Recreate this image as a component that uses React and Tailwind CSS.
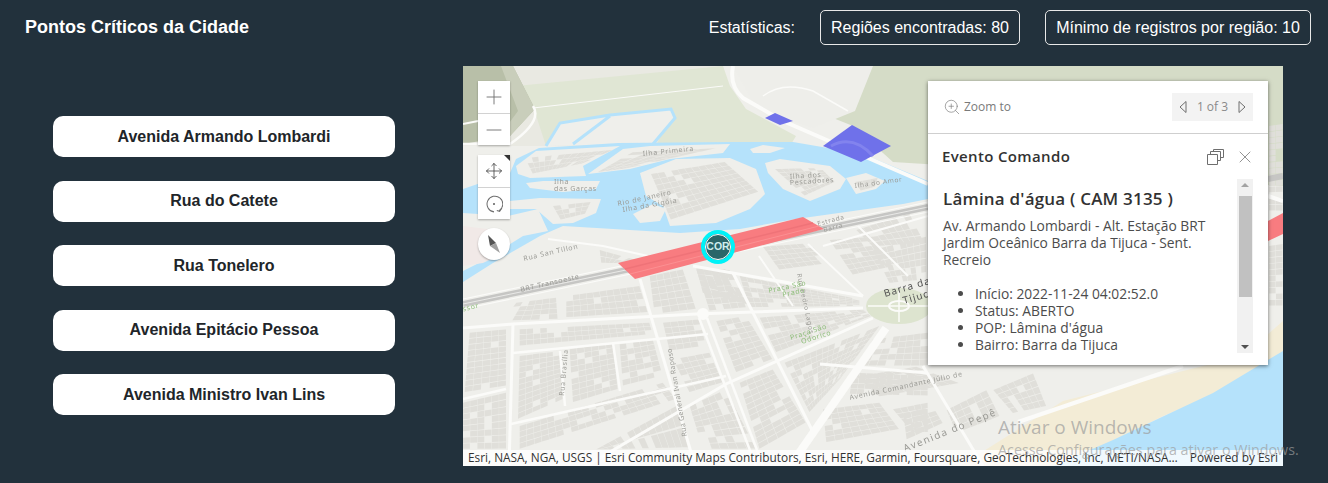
import React from 'react';
import { ZoomIn, Plus, Minus, Move, X } from 'lucide-react';

const streets = ['Avenida Armando Lombardi', 'Rua do Catete', 'Rua Tonelero', 'Avenida Epitácio Pessoa', 'Avenida Ministro Ivan Lins'];

const z2 = (q) => q.map(([x, y]) => [x / 3, y / 3 + 200]);
const z8 = (q) => q.map(([x, y]) => [x / 3, y / 3 + 134]);
const z9 = (q) => q.map(([x, y]) => [x / 3 + 317, y / 3 + 214]);

// quarteirões do mapa: cada um é preenchido com pequenos prédios
const blocks = [
    ...[
        [[310, 90], [530, 60], [555, 140], [310, 155]],
        [[560, 30], [660, 10], [700, 130], [575, 145]],
        [[700, 10], [810, 10], [850, 125], [740, 135]],
        [[830, 30], [1190, 100], [1190, 120], [860, 125]],
        [[160, 110], [280, 95], [285, 160], [120, 165]],
        [[170, 190], [560, 170], [570, 205], [170, 240]],
        [[600, 170], [710, 160], [730, 240], [620, 255]],
        [[760, 165], [850, 150], [930, 280], [820, 320]],
        [[890, 155], [1200, 130], [1225, 150], [940, 260]],
        [[20, 200], [130, 190], [130, 360], [5, 380]],
        [[170, 270], [290, 255], [300, 400], [165, 460]],
        [[320, 250], [450, 230], [465, 370], [330, 410]],
        [[470, 235], [570, 220], [600, 330], [480, 360]],
        [[630, 280], [740, 260], [780, 350], [680, 380]],
        [[0, 410], [130, 380], [130, 550], [0, 550]],
        [[170, 480], [600, 350], [640, 400], [170, 550]],
        [[830, 350], [930, 310], [1030, 470], [890, 550]],
        [[680, 420], [790, 370], [880, 550], [720, 550]],
        [[400, 550], [640, 420], [680, 550], [420, 550]],
        [[965, 290], [1250, 180], [1130, 340], [1040, 440]],
        [[1230, 220], [1395, 200], [1395, 300], [1190, 300]],
        [[1170, 320], [1395, 330], [1395, 390], [1160, 385]],
        [[1080, 430], [1250, 410], [1310, 490], [1090, 530]],
        [[1290, 430], [1395, 410], [1395, 500], [1350, 500]],
    ].map(z2),
    ...[
        [[700, 205], [800, 210], [870, 320], [720, 280]],
        [[900, 140], [1040, 130], [1100, 190], [950, 210]],
        [[1100, 120], [1230, 110], [1290, 200], [1170, 225]],
        [[1180, 90], [1340, 40], [1385, 130], [1230, 140]],
        [[1230, 150], [1390, 110], [1390, 240], [1280, 250]],
        [[410, 150], [520, 180], [470, 190], [415, 190]],
    ].map(z8),
    ...[
        [[640, 330], [760, 280], [800, 380], [700, 400]],
        [[500, 390], [620, 330], [660, 410], [530, 460]],
        [[370, 400], [460, 380], [490, 430], [380, 480]],
        [[230, 290], [410, 260], [540, 310], [300, 350]],
    ].map(z9),
    // ilhas
    [[188, 108], [262, 96], [296, 126], [208, 154]],
    [[135, 106], [170, 86], [255, 82], [165, 102]],
    [[312, 103], [358, 102], [372, 116], [342, 130]],
    [[392, 116], [415, 112], [412, 121], [398, 125]],
    [[90, 140], [128, 136], [122, 148], [98, 154]],
    [[62, 92], [150, 84], [118, 98], [70, 108]],
    // faixa à direita do popup
    [[806, 60], [820, 58], [820, 145], [806, 145]],
    [[806, 180], [820, 178], [820, 240], [806, 240]],
];

const lerp = (a, b, t) => [a[0] + (b[0] - a[0]) * t, a[1] + (b[1] - a[1]) * t];

const buildBuildings = () => {
    let seed = 7;
    const rnd = () => {
        seed = (seed * 16807) % 2147483647;
        return seed / 2147483647;
    };
    const out = [];
    blocks.forEach((q) => {
        const w = Math.hypot(q[1][0] - q[0][0], q[1][1] - q[0][1]);
        const h = Math.hypot(q[3][0] - q[0][0], q[3][1] - q[0][1]);
        const nx = Math.max(2, Math.round(w / 7));
        const ny = Math.max(2, Math.round(h / 6));
        for (let i = 0; i < nx; i++) {
            for (let j = 0; j < ny; j++) {
                if (rnd() < 0.12) continue;
                const cell = [[i, j], [i + 0.95, j], [i + 0.95, j + 0.9], [i, j + 0.9]].map(([u, v]) =>
                    lerp(lerp(q[0], q[1], u / nx), lerp(q[3], q[2], u / nx), v / ny)
                );
                out.push(cell.map((p) => p.map((n) => n.toFixed(1)).join(',')).join(' '));
            }
        }
    });
    return out;
};

const buildings = buildBuildings();

const whiteRoads = [
    ['M0 262 L50 258 L233 248 L400 242', 3],
    ['M230 200 L400 230', 3],
    ['M423 262 L327 400', 8],
    ['M236 252 L293 400', 2.5],
    ['M244 252 L300 400', 2.5],
    ['M177 213 L232 400', 3],
    ['M270 207 L352 370', 3],
    ['M50 258 L46 400', 3],
    ['M48 358 L263 310', 2.5],
    ['M123 400 L263 318 L410 252', 3],
    ['M50 287 L245 268', 2.5],
    ['M0 333 L43 323', 2.5],
    ['M357 298 L465 307', 3],
    ['M97 285 L102 340', 2.5],
    ['M150 277 L157 325', 2.5],
    ['M555 356 L720 300', 4],
    ['M460 300 L520 400', 3],
    ['M270 0 Q266 20 280 32 L320 55 L465 118', 4],
    ['M805 130 L820 135', 4],
    ['M0 58 L40 50', 2],
    ['M70 40 Q80 55 47 78 L0 78', 2.5],
    ['M85 173 L140 180 L185 190', 2],
    ['M296 190 L330 240', 2],
    ['M345 178 L400 230', 2],
    ['M395 160 L445 210', 2],
    ['M360 180 L465 150', 2],
    ['M300 30 Q320 15 350 25 L385 45', 1.5],
    ['M70 42 L260 20', 1],
];

const MapLabel = ({ x, y, rotate = 0, fill = '#9b9b96', size = 7, spacing = 0.7, children }) => (
    <text x={x} y={y} transform={`rotate(${rotate} ${x} ${y})`} fill={fill} fontSize={size} letterSpacing={spacing} fontFamily="'Noto Sans', sans-serif">
        {children}
    </text>
);

const LAND = '#efefeb';

const BaseMap = () => (
    <svg viewBox="0 0 820 400" className="absolute inset-0 w-full h-full blur-[0.7px]">
        <rect width="820" height="400" fill={LAND} />
        {/* morros e parque */}
        <path d="M340 0H820V120L430 96L390 60L365 50Z" fill="#d5dcc7" />
        <path d="M0 0H260L270 40L200 80H0Z" fill="#e9e9e2" />
        <path d="M270 0H410L392 45L350 62L295 45Z" fill="#eeeeea" />
        <path d="M53 20L260 0L267 20L283 43L333 70L327 80H193L210 43L147 48L83 80L70 40Z" fill="#e0e6d4" />
        <path d="M0 0H50L72 43L47 70L0 78Z" fill="#b8bfa8" />
        <path d="M50 0L72 43L47 70L35 72L55 45L38 0Z" fill="#c9cebb" />
        {/* terreno cercado pelo canal */}
        <path d="M83 80L97 57L147 49L208 43L212 52L190 78Z" fill={LAND} />
        {/* água */}
        <path d="M0 123L47 107L53 93L76 82L155 77L267 76L330 76L400 88L465 115L465 133L440 138L333 153L277 163L217 167L100 160L77 170L30 197L0 216Z" fill="#b5e2fb" />
        <path d="M83 80L97 57L147 49L208 43L212 52L190 78M110 78L147 50" stroke="#b5e2fb" strokeWidth="3" fill="none" />
        {/* ilhas */}
        <path d="M53 100L73 85L157 80L120 100L123 110L67 112L55 108Z" fill={LAND} />
        <path d="M125 108L160 83L187 80L267 78L260 87L207 93L167 103Z" fill={LAND} />
        <path d="M177 107L213 93L267 92L293 103L302 128L287 143L253 157L207 160L200 140L183 130Z" fill={LAND} />
        <path d="M63 117L80 115L137 115L133 123L100 126L67 122Z" fill={LAND} />
        <path d="M47 135L77 132L138 133L133 147L110 157L90 158L73 143L47 143Z" fill={LAND} />
        <path d="M302 97L317 93L367 100L383 113L377 123L347 135L320 123L305 107Z" fill={LAND} />
        <path d="M383 112L403 107L422 115L413 123L393 128Z" fill={LAND} />
        <path d="M287 83L300 79L322 82L307 87L290 87Z" fill={LAND} />
        <path d="M170 148L190 138L203 143L197 155L177 157Z" fill={LAND} />
        <path d="M0 147L45 150L75 143L85 165L60 170L20 195L0 205Z" fill={LAND} />
        <path d="M0 160L40 165L45 185L20 197L0 200Z" fill="#f1e9e7" />
        {/* praça */}
        <ellipse cx="436" cy="240" rx="33" ry="18" fill="#dde4cf" />
        {/* praia e mar */}
        <path d="M497 400L600 335L780 290L820 255V300L700 350L600 400Z" fill="#f3ecd6" />
        <path d="M820 285V400H590L650 374L750 327Z" fill="#b5e2fb" />
        <g fill="#e0dfda">
            {buildings.map((points, i) => (
                <polygon key={i} points={points} />
            ))}
        </g>
        {whiteRoads.map(([d, w]) => (
            <path key={d} d={d} stroke="#fbfbf9" strokeWidth={w} fill="none" />
        ))}
        <circle cx="240" cy="248" r="6" fill="#fbfbf9" />
        <ellipse cx="436" cy="240" rx="10" ry="5" fill="none" stroke="#fbfbf9" strokeWidth="2" />
        <path d="M405 240H465M436 225V256" stroke="#fbfbf9" strokeWidth="1.5" />
        {/* BRT */}
        <path d="M0 238L465 141M805 113L820 110" stroke="#c6c6c4" strokeWidth="6" fill="none" />
        <path d="M0 238L465 141" stroke="#e9e9e7" strokeWidth="1" fill="none" />
        <path d="M0 233L465 136M0 243L465 146" stroke="#fbfbf9" strokeWidth="1.2" fill="none" />
        {/* regiões */}
        <polygon points="302,52 312,47 330,55 317,59" fill="#6f71ea" />
        <polygon points="360,80 389,59 428,80 398,96" fill="#6f71ea" />
        <path d="M368 80Q390 68 410 90" stroke="#8283ee" strokeWidth="3" fill="none" />
        <polygon points="155,197 340,151 361,163 172,213" fill="#f87c80" />
        <path d="M162 203L350 157" stroke="#ef7378" strokeWidth="1.5" />
        <path d="M167 208L356 160" stroke="#fb9092" strokeWidth="1" />
        <polygon points="805,155 820,147 820,168 805,175" fill="#f87c80" />
        {/* nomes */}
        <MapLabel x={180} y={90} rotate={-6}>Ilha Primeira</MapLabel>
        <MapLabel x={91} y={118}>Ilha</MapLabel>
        <MapLabel x={91} y={125}>das Garças</MapLabel>
        <MapLabel x={155} y={140} rotate={-12}>Rio de Janeiro</MapLabel>
        <MapLabel x={160} y={146} rotate={-10}>Ilha da Gigóia</MapLabel>
        <MapLabel x={327} y={113} rotate={-4}>Ilha dos</MapLabel>
        <MapLabel x={327} y={119} rotate={-4}>Pescadores</MapLabel>
        <MapLabel x={392} y={122} rotate={-8} size={6.5}>Ilha do Amor</MapLabel>
        <MapLabel x={61} y={195} rotate={-13}>Rua San Tillon</MapLabel>
        <MapLabel x={58} y={226} rotate={-13}>BRT Transoeste</MapLabel>
        <MapLabel x={355} y={160} rotate={-15} size={6.5}>Estrada</MapLabel>
        <MapLabel x={361} y={166} rotate={-15} size={6.5}>Barra</MapLabel>
        <MapLabel x={334} y={208} rotate={78} size={6.5}>Rua Pedro Lagos</MapLabel>
        <MapLabel x={101} y={330} rotate={-85}>Rua Brasília</MapLabel>
        <MapLabel x={224} y={370} rotate={-100} spacing={0.3}>Rua General Ivan Raposo</MapLabel>
        <MapLabel x={306} y={227} rotate={-12} fill="#8cbd78" size={7}>Praça São</MapLabel>
        <MapLabel x={320} y={231} rotate={-12} fill="#8cbd78" size={7}>Prado</MapLabel>
        <MapLabel x={328} y={274} rotate={-18} fill="#8cbd78">Praça São</MapLabel>
        <MapLabel x={339} y={278} rotate={-18} fill="#8cbd78">Odorico</MapLabel>
        <MapLabel x={422} y={231} rotate={-16} fill="#555" size={10} spacing={1}>Barra da</MapLabel>
        <MapLabel x={441} y={238} rotate={-16} fill="#555" size={10} spacing={1}>Tijuca</MapLabel>
        <MapLabel x={387} y={334} rotate={-12}>Avenida Comandante Júlio de</MapLabel>
        <MapLabel x={442} y={386} rotate={-22} size={10} spacing={1.4}>Avenida do Pepê</MapLabel>
        <MapLabel x={-20} y={251} rotate={-15} fill="#8cbd78">Professor</MapLabel>
    </svg>
);

const MapButton = ({ children, divider }) => (
    <div className={`w-8 h-8 flex items-center justify-center text-[#6e6e6e] relative ${divider ? 'border-t border-[#d2d2d2]' : ''}`}>{children}</div>
);

const DockIcon = () => (
    <svg width="17" height="16" viewBox="0 0 17 16" fill="none" stroke="#6e6e6e" strokeWidth="1">
        <path d="M0.5 5.5h10v10h-10z" />
        <path d="M3.5 5.5v-3h10v9h-3" />
        <path d="M6.5 2.5v-2h10v8h-3" />
    </svg>
);

const Popup = () => (
    <div className="absolute top-[15px] left-[465px] w-[340px] h-[284px] bg-white shadow-[0_1px_4px_rgba(0,0,0,0.55)] text-[#4c4c4c] font-['Open_Sans',sans-serif]">
        <div className="h-[53px] pl-[15px] pr-4 border-b border-[#cfcfcf] flex items-center justify-between">
            <div className="flex items-center gap-[3px] text-[12px] text-[#7a7a7a]">
                <ZoomIn size={18} strokeWidth={0.9} />
                <span>Zoom to</span>
            </div>
            <div className="w-[81px] h-7 mr-[-1px] bg-[#f3f3f3] flex items-center justify-between px-[6px] text-[12px] text-[#8a8a8a]">
                <svg width="10" height="14" viewBox="0 0 10 14" fill="none" stroke="#6e6e6e"><path d="M8 1.5L2 7l6 5.5z" /></svg>
                <span>1 of 3</span>
                <svg width="10" height="14" viewBox="0 0 10 14" fill="none" stroke="#6e6e6e"><path d="M2 1.5L8 7l-6 5.5z" /></svg>
            </div>
        </div>
        <div className="flex items-center justify-between pl-[14px] pr-[13px] h-[45px]">
            <h2 className="text-[15px] font-semibold tracking-[0.35px] text-[#323232]">Evento Comando</h2>
            <div className="flex items-center gap-[11px]">
                <DockIcon />
                <X size={20} strokeWidth={0.9} className="text-[#6e6e6e]" />
            </div>
        </div>
        <div className="flex pl-[15px] pr-[15px]">
            <div className="flex-1 pt-[10px] text-[13.8px] leading-[17px]">
                <h3 className="text-[17px] font-semibold leading-5 tracking-[0.2px] text-[#323232] mb-[8px]">Lâmina d'água ( CAM 3135 )</h3>
                <p className="w-[285px]">Av. Armando Lombardi - Alt. Estação BRT Jardim Oceânico Barra da Tijuca - Sent. Recreio</p>
                <ul className="mt-[17px] pl-[32px] list-disc">
                    <li>Início: 2022-11-24 04:02:52.0</li>
                    <li>Status: ABERTO</li>
                    <li>POP: Lâmina d'água</li>
                    <li>Bairro: Barra da Tijuca</li>
                </ul>
            </div>
            <div className="w-4 h-[174px] bg-[#f1f1f1] flex flex-col items-center pt-[4px]">
                <div className="w-0 h-0 border-x-[4px] border-x-transparent border-b-[4px] border-b-[#a3a3a3]" />
                <div className="w-[13px] h-[101px] bg-[#c1c1c1] mt-[9px]" />
                <div className="w-0 h-0 border-x-[4px] border-x-transparent border-t-[4px] border-t-[#505050] mt-[48px]" />
            </div>
        </div>
    </div>
);

const App = () => {
    return (
        <div className="relative h-screen overflow-hidden bg-[#22313c] font-['Liberation_Sans',sans-serif]">
            <header className="h-[66px] pt-[10px] pl-[25px] pr-[17px] flex items-start justify-between text-white">
                <h1 className="text-[18px] leading-[35px] font-bold">Pontos Críticos da Cidade</h1>
                <div className="flex items-center text-[16px]">
                    <span className="mr-[25px]">Estatísticas:</span>
                    <div className="w-[200px] h-[35px] mr-[25px] flex items-center justify-center border border-[#e8e8e8] rounded-[5px]">Regiões encontradas: 80</div>
                    <div className="w-[266px] h-[35px] flex items-center justify-center border border-[#e8e8e8] rounded-[5px]">Mínimo de registros por região: 10</div>
                </div>
            </header>
            <main className="flex">
                <aside className="w-[463px] pl-[53px] pr-[68px] pt-[50px] flex flex-col gap-[23.5px]">
                    {streets.map((street) => (
                        <button key={street} className="h-[41px] shrink-0 bg-white rounded-[10px] text-[16px] font-bold text-[#212529]">
                            {street}
                        </button>
                    ))}
                </aside>
                <section className="relative w-[820px] h-[400px] overflow-hidden">
                    <BaseMap />
                    {/* marcador */}
                    <div className="absolute left-[238px] top-[164px] w-[34px] h-[34px] rounded-full bg-[#2a6669] border-[4px] border-[#00f2f7] outline outline-1 -outline-offset-[5px] outline-white flex items-center justify-center text-[10.5px] font-bold text-[#cfeeee]">
                        COR
                    </div>
                    {/* controles */}
                    <div className="absolute left-[15px] top-[15px] flex flex-col">
                        <div className="w-8 bg-white shadow-[0_1px_2px_rgba(0,0,0,0.3)]">
                            <MapButton><Plus size={24} strokeWidth={0.9} /></MapButton>
                            <MapButton divider><Minus size={24} strokeWidth={0.9} /></MapButton>
                        </div>
                        <div className="w-8 mt-[10px] bg-white shadow-[0_1px_2px_rgba(0,0,0,0.3)] relative">
                            <MapButton><Move size={18} strokeWidth={1.1} className="text-[#444]" /></MapButton>
                            <div className="absolute top-0 right-0 w-0 h-0 border-l-[6px] border-l-transparent border-t-[6px] border-t-[#323232]" />
                            <MapButton divider>
                                <svg width="18" height="18" viewBox="0 0 16 16" fill="none" stroke="#6e6e6e" strokeWidth="0.9">
                                    <path d="M12.5 14A7 7 0 1 0 8 15" />
                                    <path d="M15 11.5L13 14.5L10.5 13.8" />
                                    <circle cx="8" cy="8" r="0.5" fill="#6e6e6e" />
                                </svg>
                            </MapButton>
                        </div>
                        <div className="w-8 h-8 mt-[9px] rounded-full bg-white shadow-[0_1px_2px_rgba(0,0,0,0.3)] flex items-center justify-center">
                            <svg width="14" height="20" viewBox="0 0 14 20">
                                <path d="M1 1L9 9L3 12Z" fill="#555" />
                                <path d="M9 9L13 19L3 12Z" fill="#a0a0a0" />
                            </svg>
                        </div>
                    </div>
                    <Popup />
                    {/* atribuição */}
                    <div className="absolute left-0 right-0 bottom-0 h-[16px] bg-white/80 px-[5px] flex justify-between items-center text-[11.85px] text-[#323232] font-['Open_Sans',sans-serif] whitespace-nowrap">
                        <span>Esri, NASA, NGA, USGS | Esri Community Maps Contributors, Esri, HERE, Garmin, Foursquare, GeoTechnologies, Inc, METI/NASA…</span>
                        <span>Powered by Esri</span>
                    </div>
                </section>
            </main>
            {/* marca d'água do Windows */}
            <div className="absolute left-[998px] top-[413px] text-[#9c9c9c]/70 font-['Open_Sans',sans-serif] pointer-events-none whitespace-nowrap">
                <div className="text-[19px] leading-[28px]">Ativar o Windows</div>
                <div className="text-[14.3px] leading-[18px]">Acesse Configurações para ativar o Windows.</div>
            </div>
        </div>
    );
};

export default App;
